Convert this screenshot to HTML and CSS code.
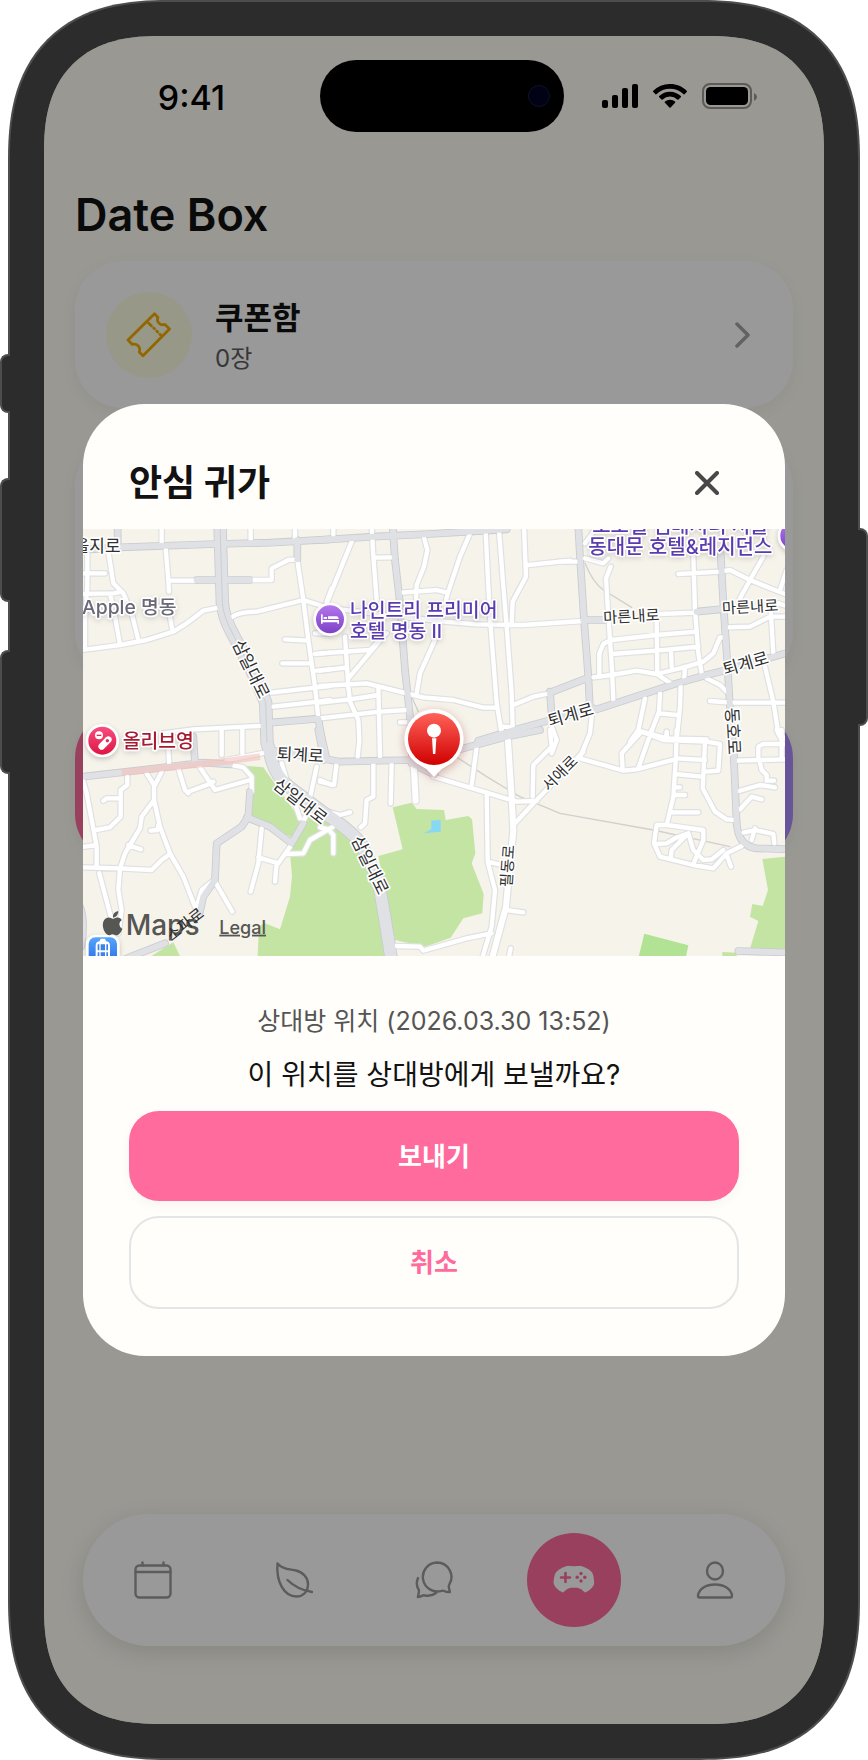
FILE: index.html
```html
<!DOCTYPE html>
<html lang="ko">
<head>
<meta charset="utf-8">
<meta name="viewport" content="width=device-width, initial-scale=1">
<title>Date Box</title>
<link rel="stylesheet" href="styles.css">
</head>
<body>
<div class="phone">
  <span class="side side-action"></span>
  <span class="side side-up"></span>
  <span class="side side-down"></span>
  <span class="side side-power"></span>

  <div class="screen">
    <header class="status">
      <span class="time">9:41</span>
      <span class="island"><span class="camera"></span></span>
      <span class="signals">
        <svg width="36" height="24" viewBox="0 0 36 24"><rect y="16" width="6" height="8" rx="2"/><rect x="10" y="11" width="6" height="13" rx="2"/><rect x="20" y="4" width="6" height="20" rx="2"/><rect x="30" width="6" height="24" rx="2"/></svg>
        <svg width="34" height="24" viewBox="0 0 34 24"><path d="M17 0C23.600 0 29.600 2.600 33.700 6.800Q34.300 7.500 33.700 8.100L31.500 10.200Q30.900 10.700 30.300 10.100A19 19 0 0 0 3.700 10.100Q3.100 10.700 2.500 10.200L.3 8.100Q-.3 7.500.3 6.800A23.600 23.600 0 0 1 17 0Z"/><path d="M17 7.800c4.200 0 8 1.600 10.800 4.300q.6.600 0 1.200l-2.300 2.200q-.6.500-1.200 0a10.600 10.600 0 0 0-14.600 0q-.6.500-1.200 0l-2.300-2.200q-.6-.6 0-1.200A15.600 15.600 0 0 1 17 7.800Z"/><path d="M17 15.700c1.900 0 3.700.7 5 1.900q.7.600.1 1.200l-4.500 4.600q-.6.600-1.200 0l-4.500-4.600q-.6-.6.1-1.200a7.500 7.500 0 0 1 5-1.900Z"/></svg>
        <svg width="56" height="26" viewBox="0 0 56 26"><rect x="1" y="1" width="48" height="24" rx="7" fill="none" stroke="#000" stroke-opacity=".4" stroke-width="2"/><rect x="4" y="4" width="42" height="18" rx="4.500"/><path d="M52 10q3 1.500 3 4t-3 4Z" opacity=".4"/></svg>
      </span>
    </header>

    <main class="content">
      <h1>Date Box</h1>
      <button class="card coupon" type="button">
        <span class="badge">
          <svg width="46" height="46" viewBox="0 0 46 46" fill="none" stroke="#f4ac00" stroke-width="2.800" stroke-linejoin="round" stroke-linecap="round"><path d="M28.500 1.800 32 5.500Q30.500 9 33 11.200T39 12.500L43.500 17 17 43.800 13.300 40Q14.500 36.500 12.300 34T6 32.300L2 28Z"/><path d="m22.500 11 3 3m2.200 2 .8.800m2.200 2.200 1 1m2.200 2.200 2 2"/></svg>
        </span>
        <span class="coupon-text"><strong>쿠폰함</strong><small>0장</small></span>
        <svg class="chevron" width="16" height="28" viewBox="0 0 16 28" fill="none" stroke="#a3a3a3" stroke-width="3.500" stroke-linecap="round" stroke-linejoin="round"><path d="m2 3 11 11L2 25"/></svg>
      </button>
      <div class="card card-plain"></div>
      <div class="card card-gradient"></div>
    </main>

    <nav class="tabs" aria-label="메뉴">
      <button type="button" aria-label="캘린더"><svg width="38" height="38" viewBox="0 0 38 38"><rect x="1.500" y="4.500" width="35" height="32" rx="4"/><path d="M1.500 11h35M8.500 1.500v3m21-3v3"/></svg></button>
      <button type="button" aria-label="기록"><svg width="38" height="38" viewBox="0 0 38 38"><path d="M2.500 2.500C8 9 15 8 21 9.500 28 11 33 17 33 23 33 31 28 35.500 21.500 35.500 9 35.500 1 21 2.500 2.500Z"/><path d="M12.500 19Q22 28.500 37 31"/></svg></button>
      <button type="button" aria-label="채팅"><svg width="38" height="38" viewBox="0 0 38 38"><path d="M22 1.500A14.500 14.500 0 0 1 34.300 23.500Q33.500 25 34 27l.8 4q-3 .3-5.500-1-1.200-.7-2.500-.2A14.500 14.500 0 1 1 22 1.500Z"/><path d="M3 17q-2.500 6 .3 11 1 1.500.5 3.500l-.9 4.500q2.600-.2 4.700-1.400 1-.5 2.500-.1 6.400 1 11-2.500"/></svg></button>
      <button type="button" class="active" aria-label="게임"><svg width="42" height="30" viewBox="0 0 42 30"><path d="M6 1.500Q9-.3 13 .3q4 1 8 1T29 .3q4-.6 7 1.200 4 4 5 13.500.6 6 .4 10-.3 4-4 5-3 .6-6-3-3.500-4-7-4.300h-7q-3 .3-6.500 4-3.500 4-6.500 3.300-4-.8-4-5Q-.2 20 1 13 2.500 5 6 1.500Z"/><g class="pad"><path d="M12.500 8v9m-4.500-4.500h9"/><circle cx="28" cy="8.500" r="1.700"/><circle cx="28" cy="16" r="1.700"/><circle cx="24.200" cy="12.300" r="1.700"/><circle cx="31.800" cy="12.300" r="1.700"/></g></svg></button>
      <button type="button" aria-label="프로필"><svg width="38" height="38" viewBox="0 0 38 38"><ellipse cx="19" cy="10" rx="8" ry="8.500"/><path d="M3.500 36.500q-1.500 0-1.500-2C3 28 10 23.500 19 23.500s16 4.500 17 11q0 2-1.500 2Z"/></svg></button>
    </nav>

    <div class="backdrop">
      <section class="modal" role="dialog" aria-modal="true" aria-labelledby="dialog-title">
        <header class="modal-head">
          <h2 id="dialog-title">안심 귀가</h2>
          <button class="close" type="button" aria-label="닫기"><svg width="24" height="24" viewBox="0 0 24 24" fill="none" stroke="#484848" stroke-width="4" stroke-linecap="round"><path d="m2 2 20 20M22 2 2 22"/></svg></button>
        </header>

        <svg class="map" viewBox="0 0 2106 1281" role="img" aria-label="지도">
          <defs>
            <linearGradient id="gRed" x2="0" y2="1"><stop stop-color="#ff6259"/><stop offset="1" stop-color="#cf0000"/></linearGradient>
            <linearGradient id="gPurple" x2="0" y2="1"><stop stop-color="#b679ee"/><stop offset="1" stop-color="#7a3fc4"/></linearGradient>
            <linearGradient id="gPink" x2="0" y2="1"><stop stop-color="#fa4f83"/><stop offset="1" stop-color="#dc1440"/></linearGradient>
            <linearGradient id="gBlue" x2="0" y2="1"><stop stop-color="#58a8ff"/><stop offset="1" stop-color="#2467e0"/></linearGradient>
            <g id="streets">
              <path transform="translate(-39 -27)" d="M275 20V75M542 20V65M675 20V60M287 85 295 180 297 215M297 275 308 335M295 182H380M540 180H605V145L655 120 680 118M682 120 700 240 715 360 735 500 745 595M485 292Q505 276 560 275L600 265 700 240 770 262M770 245 785 205M30 391 150 375 230 360 310 335 350 310 400 272 450 262M115 95 130 190 160 220 185 280 205 360M30 160H105M30 222 130 220 155 215M52 100V200L45 300V388M120 220 135 290 150 375M645 358 715 362M637 430H725M735 340H780M735 402 780 398M740 452 780 448M605 518 735 503 780 498M610 560 745 545 780 540M280 640 370 628 570 618M455 628V705M517 622V700"/>
              <path transform="translate(711 -27)" d="M40 20V45M95 65 20 250M155 20 160 110 170 240M160 113 215 112M310 45 322 90 312 140 290 195 288 240M450 40 420 110 385 215 345 360 300 460 290 520M497 35 505 200 512 320 530 550 545 640M537 30 550 200 560 320 575 520 578 620M612 20 618 170 578 245 575 310M625 135 750 122M245 218 350 210 380 218M0 258 60 268 240 290 375 305 470 313 610 315 790 303M0 400 150 390 200 340M75 350 85 500 90 545 115 600 118 660 113 710M0 452 75 443M0 498 140 490 260 520 310 532 400 540 490 563H530M85 475 190 350M0 548 90 538 175 525M0 595 180 575 260 570M175 500 180 710M240 607H262M580 555 640 530 680 522M548 620 575 622M695 620 710 660 695 700"/>
              <path transform="translate(1431 -27)" d="M0 125H50M105 30 75 70M75 115 130 130 145 115M152 140 138 175 145 290 155 430 160 540M400 110 405 270 415 400 425 460M355 162 480 155 510 150 570 180 680 224M610 110 570 180 540 235M660 210 680 150M300 282 405 278M655 250 680 258M155 360 290 345 410 335M155 402 290 392 415 380M290 300 292 460M333 395 335 440M100 472 155 465 230 452 290 462 335 492M290 462 380 440 430 425 460 400 480 352H492M155 358 130 372 118 400V465M375 440 372 485M362 500 360 560 350 660M505 322 570 320 630 290H680M632 270 640 400M440 475 480 495 505 520M450 543 510 548H680M615 440 640 545 655 640 680 660M255 535 235 630 210 665M300 520 297 575 270 645M297 580 350 585M235 632 320 655 440 658M320 635V655M95 590 90 640 60 712"/>
              <path transform="translate(-39 603)" d="M480 104 520 112 545 140V185M470 90 600 65M295 60 298 110M325 115 345 180 355 190M355 185 410 165 430 155M385 105 435 180 540 150M172 140V165L152 180V260L120 292 78 300M100 212 110 205H150M39 150 50 190 80 350V410M30 352 80 345M230 130 252 165V210L215 260 210 295 165 370 150 415 145 480 155 540 145 610M275 125 255 165M252 210 270 290 300 370 340 440 375 530M242 302 262 300 265 285M175 345 213 358M30 412 150 415 245 420 275 390 300 372M88 430 125 570M380 530 395 480 430 452M435 455 487 545M575 295 565 400 542 485M565 382 625 400 660 350M620 400 615 455M650 372 700 370 720 330 790 290M740 110 710 250 695 290M750 150 785 165M635 100 650 150 690 265"/>
              <path transform="translate(711 603)" d="M50 100 42 165 0 155M160 100V200L140 210 135 280 122 292M215 95 212 220M340 140 500 188 590 215 650 213M470 50 455 165M545 0 560 20M500 190 503 395 525 480 515 590 485 690M503 395 545 405M558 540 610 547M225 648 300 650 310 662 440 625 515 610M572 655 565 690M690 0 695 50 640 105 638 200M585 280 645 215 790 65M0 292 25 298 40 315V370M0 240 60 255 90 247"/>
              <path transform="translate(1431 603)" d="M60 85 190 122 230 118 345 88M240 10 185 70 188 120M275 0 235 115M245 5 310 30 440 35 480 42 475 122 440 125M350 0 348 80 340 200 320 285M348 85 435 90M435 35 428 175 465 245 500 268 525 270M345 132 425 140M345 172H360M345 195H375M335 247H415M320 10V30M320 285 290 285 282 340 300 380 400 405 460 415 500 370 545 348M320 285 430 300V330L405 390 400 405M290 342 320 340 345 325 385 310 335 360 332 385M385 310 400 360 430 390 455 388 490 360M500 375 513 410M530 92 680 88M595 90V50L610 42H680M665 0V85M598 90 605 120 620 135 620 152 642 152M537 183 600 165 645 172M540 238 575 200 605 208M550 308 585 300 640 312 643 340M585 295 575 330M650 0 665 30"/>
            </g>
            <g id="wide">
              <path d="M992 705 998 815M1274 620 1286 805 1291 905 1279 1023 1269 1133 1228 1285"/>
            </g>
            <g id="avenues">
              <path transform="translate(-39 -27)" d="M30 90 150 82 440 72 600 68 780 58M143 20V85M380 180H540M682 60V118M600 608 745 596 762 700"/>
              <path transform="translate(711 -27)" d="M0 60 160 50 330 42 560 28M218 20 225 120 240 250 255 450 270 590 276 720M475 662 600 625 820 565M690 515 695 590M690 518 800 475"/>
              <path transform="translate(1431 -27)" d="M55 20 60 110 72 300 85 470 90 572M110 568 350 490 440 465 500 450 690 396M70 300H135M410 275 480 268M482 100 490 250 500 400 510 560 522 720"/>
              <path transform="translate(-39 603)" d="M30 141 200 122 400 98 480 103M370 20 375 100M745 0 762 90M540 185 535 260 515 290 440 340 435 450 400 500 390 545M285 640 170 685M530 262 600 290 665 340 700 280M30 530Q46 570 34 650"/>
              <path transform="translate(711 603)" d="M-140 62 20 88 60 95 270 90 330 85 430 55 560 20 660 0M0 0 20 88M275 100 345 135"/>
              <path transform="translate(1431 603)" d="M520 50 530 280Q535 350 590 355L690 358M535 663 690 668"/>
            </g>
            <path id="boulevard" d="M411-10 416 153 418 220Q421 265 451 318L506 423 548 520 552 640 563 680Q575 740 620 775L720 850Q800 900 835 945L885 1050 906 1170 925 1290"/>
          </defs>

          <rect width="2106" height="1281" fill="#f6f3eb"/>
          <g fill="#c3e4a3">
            <path d="M486 710 541 715 661 885 626 925 506 865 511 745Z"/>
            <path d="M661 873 621 973 627 1040 621 1103 591 1201 546 1183 528 1191 524 1281H916L881 1023 811 913 711 843Z"/>
            <path d="M291 1281 271 1240 205 1281Z"/>
            <path transform="translate(711 603)" d="M218 232 275 218 290 237 372 240 377 270 445 258 456 268 466 370 455 400 491 492 487 550 430 565 392 623 315 650 225 630 175 378 248 358Z"/>
            <path transform="translate(1431 603)" d="M607 387 680 380V660L570 656 595 573 570 560 577 522 608 528 624 480ZM487 666 530 668V680H487Z"/>
            <path transform="translate(1431 603)" fill="#b2e293" d="M253 611 385 646 378 680H236Z"/>
          </g>
          <path fill="#86d8f5" d="M1024 913 1045 900V875L1073 872V908Z"/>
          <g class="rail"><path d="M986 503 1006 548M1111 678 1211 743 1311 803 1431 853 1711 903 1941 953M1506 103Q1531 163 1561 183L1646 235"/></g>
          <g class="roads">
            <use href="#streets" class="case-s"/><use href="#wide" class="case-w"/>
            <use href="#avenues" class="case-a"/><use href="#boulevard" class="case-b"/>
            <use href="#streets" class="fill-s"/><use href="#wide" class="fill-w"/>
            <use href="#avenues" class="fill-a"/><use href="#boulevard" class="fill-b"/>
            <path d="M411-10 416 153 418 220Q421 265 451 318L506 423 548 520 552 640" stroke="#cdced2" stroke-width="3"/>
            <path d="M116 730 431 697 531 683" stroke="#f3c2ba" stroke-opacity=".6" stroke-width="20" stroke-linecap="butt"/>
          </g>

          <g class="label">
            <text x="-28" y="69">을지로</text>
            <text x="-3" y="255" class="place" fill="#696877">Apple 명동</text>
            <g text-anchor="middle">
              <text transform="translate(488 428) rotate(64)">삼일대로</text>
              <text transform="translate(651 696) rotate(3)">퇴계로</text>
              <text transform="translate(641 831) rotate(38)">삼일대로</text>
              <text transform="translate(845 1016) rotate(64)">삼일대로</text>
              <text transform="translate(1468 575) rotate(-16)">퇴계로</text>
              <text transform="translate(1993 421) rotate(-16)">퇴계로</text>
              <text transform="translate(1932 607) rotate(87)">동호로</text>
              <text class="small" transform="translate(1646 278) rotate(-3)">마른내로</text>
              <text class="small" transform="translate(2002 250) rotate(-3)">마른내로</text>
              <text class="small" transform="translate(1442 744) rotate(-45)">서애로</text>
              <text class="small" transform="translate(1290 1012) rotate(-86)">필동로</text>
            </g>
            <text x="801" y="265" class="place" fill="#5a3cb0">나인트리 프리미어</text>
            <text x="801" y="327" class="place" fill="#5a3cb0">호텔 명동 II</text>
            <text x="1792" y="13" class="place place-lg" fill="#5a3cb0" text-anchor="middle">노보텔 앰배서더 서울</text>
            <text x="1792" y="75" class="place place-lg" fill="#5a3cb0" text-anchor="middle">동대문 호텔&amp;레지던스</text>
            <text x="119" y="658" class="place" fill="#a51a30">올리브영</text>
          </g>

          <g class="poi">
            <circle cx="741" cy="271" r="46" fill="url(#gPurple)"/>
            <circle cx="2134" cy="20" r="46" fill="url(#gPurple)"/>
            <circle cx="58" cy="635" r="46" fill="url(#gPink)"/>
            <rect x="13" y="1221" width="93" height="90" rx="24" fill="url(#gBlue)"/>
          </g>
          <path d="M714 256H719V273H768V284H763V280H719V284H714ZM722 264H732V270H722ZM735 262H762Q767 264 767 270H735Z" fill="#fff"/>
          <g transform="rotate(-45 66 642)"><rect x="42" y="632" width="48" height="20" rx="10" fill="#fff"/><circle cx="76" cy="642" r="5" fill="#e3265a"/></g>
          <circle cx="48" cy="619" r="12" fill="#fff"/><path d="M41 619H55" stroke="#e3265a" stroke-width="4"/>
          <path d="M38 1285V1250Q38 1237 52 1236H67Q81 1237 81 1250V1285ZM50 1236 53 1229H66L69 1236" fill="#fff"/>
          <path d="M44 1246H49V1264H44ZM53 1246H66V1264H53ZM70 1246H75V1264H70ZM44 1270H49V1285H44ZM53 1270H66V1285H53ZM70 1270H75V1285H70Z" fill="#3b82ea"/>

          <path class="pin" d="M1053 540A90 90 0 0 1 1095 709Q1075 719 1065 731L1053 744 1041 731Q1031 719 1011 709A90 90 0 0 1 1053 540Z" fill="#fff"/>
          <circle cx="1053" cy="630" r="78" fill="url(#gRed)"/>
          <circle cx="1053" cy="605" r="21" fill="#fff"/><path d="M1047 628H1060L1057 675H1050Z" fill="#fff"/>

          <g class="brand">
            <path transform="translate(19 182) scale(.84)" d="M103 1148q2 9-5 17-7 7-14 6-2-8 5-16 6-6 14-7ZM116 1180q-9 6-9 15 1 12 11 17-4 11-12 19-7 6-15 2-8-4-16 0-8 3-14-3-13-14-13-33 1-23 20-26 7 0 13 3 4 2 8 0 7-4 14-3 8 1 13 9Z"/>
            <text x="128" y="1218" class="maps">Maps</text>
            <a href="#legal"><text x="409" y="1214" class="legal">Legal</text></a>
            <text class="sopa" text-anchor="middle" transform="translate(316 1199) rotate(-38)">소파로</text>
            <text class="sopa" text-anchor="middle" transform="translate(945 1305) rotate(65)">소</text>
          </g>
        </svg>

        <div class="modal-body">
          <p class="meta">상대방 위치 (2026.03.30 13:52)</p>
          <p class="question">이 위치를 상대방에게 보낼까요?</p>
          <button class="btn btn-primary" type="button">보내기</button>
          <button class="btn btn-outline" type="button">취소</button>
        </div>
      </section>
    </div>
  </div>
</div>
</body>
</html>
```
FILE: styles.css
```css
* { box-sizing: border-box; }
body {
  margin: 0;
  background: #fff;
  color: #121212;
  font-family: Inter, "Noto Sans CJK KR", sans-serif;
}
h1, h2, p { margin: 0; }
button {
  margin: 0;
  padding: 0;
  border: 0;
  background: none;
  color: inherit;
  font: inherit;
  cursor: pointer;
}
svg { display: block; flex: none; }

/* Device */
.phone {
  position: relative;
  display: flex;
  min-height: 100vh;
  margin: 0 8px;
  padding: 34px;
  border: 2px solid #4d4d4d;
  border-radius: 132px;
  background: #2c2c2c;
}
.screen {
  position: relative;
  display: flex;
  flex: 1;
  flex-direction: column;
  min-width: 0;
  padding: 24px 31px 78px;
  overflow: hidden;
  border-radius: 94px;
  background: #fffef6;
}
@supports (corner-shape: superellipse(1.3)) {
  .phone { border-radius: 160px; corner-shape: superellipse(1.3); }
  .screen { border-radius: 116px; corner-shape: superellipse(1.3); }
}
.side {
  position: absolute;
  left: -10px;
  width: 10px;
  border: 2px solid #4d4d4d;
  border-right: 0;
  border-radius: 8px 0 0 8px;
  background: #2c2c2c;
}
.side-action { top: 352px; height: 59px; }
.side-up { top: 476px; height: 124px; }
.side-down { top: 648px; height: 124px; }
.side-power {
  top: 526px;
  right: -10px;
  left: auto;
  height: 198px;
  border: 2px solid #4d4d4d;
  border-left: 0;
  border-radius: 0 8px 8px 0;
}

/* Status bar */
.status {
  position: relative;
  z-index: 2;
  display: grid;
  grid-template-columns: 1fr 244px 1fr;
  align-items: center;
  height: 72px;
  padding-left: 16px;
  color: #000;
}
.time {
  padding: 4px 28px 0 0;
  font-size: 34px;
  font-weight: 500;
  line-height: 40px;
  text-align: center;
}
.island {
  display: flex;
  align-items: center;
  justify-content: flex-end;
  height: 72px;
  padding-right: 14px;
  border-radius: 36px;
  background: #000;
}
.camera {
  width: 22px;
  height: 22px;
  border: 1px solid #10102a;
  border-radius: 50%;
  background: #020217;
}
.signals { display: flex; align-items: center; gap: 15px; padding-left: 38px; }

/* Page content */
.content { display: flex; flex-direction: column; gap: 30px; padding-top: 56px; }
h1 { margin-bottom: -11px; font-size: 45px; font-weight: 600; line-height: 54px; }
.card {
  border-radius: 48px;
  background: #fff;
  box-shadow: 0 4px 16px rgba(0, 0, 0, .05);
}
.coupon {
  display: flex;
  align-items: center;
  gap: 23px;
  height: 147px;
  padding: 0 42px 0 31px;
  text-align: left;
}
.badge {
  display: grid;
  place-items: center;
  width: 86px;
  height: 86px;
  border-radius: 50%;
  background: #fdfde4;
}
.coupon-text { display: flex; flex: 1; flex-direction: column; padding-top: 6px; }
.coupon-text strong { font-size: 31px; font-weight: 700; line-height: 42px; }
.coupon-text small { color: #5c5c5c; font-size: 24px; line-height: 40px; }
.card-plain { height: 242px; }
.card-gradient { height: 152px; background: linear-gradient(90deg, #ff6b9d, #ac8cff); }

/* Tab bar */
.tabs {
  display: flex;
  align-items: center;
  height: 132px;
  margin: auto 8px 0;
  border-radius: 66px;
  background: #fff;
  box-shadow: 0 6px 24px rgba(0, 0, 0, .12);
}
.tabs button {
  display: grid;
  flex: 1;
  place-items: center;
  height: 94px;
  fill: none;
  stroke: #9a9a9a;
  stroke-width: 2.4;
  stroke-linecap: round;
  stroke-linejoin: round;
}
.tabs .active { fill: #fff; stroke: none; }
.tabs .active svg {
  box-sizing: content-box;
  padding: 32px 26px;
  border-radius: 50%;
  background: #ff6b9d;
}
.pad { fill: #ff6b9d; stroke: #ff6b9d; stroke-width: 2.6; }
.pad circle { stroke: none; }

/* Dialog */
.backdrop {
  position: absolute;
  inset: 0;
  display: grid;
  align-items: center;
  padding: 0 39px;
  background: rgba(0, 0, 0, .4);
}
.modal {
  overflow: hidden;
  border-radius: 62px;
  background: #fffefa;
}
.modal-head {
  display: flex;
  align-items: center;
  justify-content: space-between;
  height: 125px;
  padding: 32px 56px 0 46px;
}
h2 { font-size: 36px; font-weight: 700; line-height: 48px; }
.close { padding: 10px; }
.map {
  width: 100%;
  height: auto;
  font-family: Inter, "Noto Sans CJK KR", sans-serif;
}
.modal-body {
  display: flex;
  flex-direction: column;
  padding: 46px 46px 47px;
  text-align: center;
}
.meta { color: #555; font-size: 25px; line-height: 38px; }
.question { margin: 13px 0 14px; font-size: 28px; line-height: 44px; }
.btn { padding-bottom: 4px; border-radius: 30px; font-size: 26px; font-weight: 700; }
.btn-primary {
  height: 90px;
  background: #ff6b9d;
  box-shadow: 0 4px 12px rgba(0, 0, 0, .04);
  color: #fff;
}
.btn-outline {
  height: 93px;
  margin-top: 15px;
  border: 2px solid #e4e5e7;
  color: #ff6b9d;
}

/* Map drawing */
.roads, .rail { fill: none; stroke-linecap: round; stroke-linejoin: round; }
.case-s { stroke: #dfe0e2; stroke-width: 20; }
.fill-s { stroke: #fff; stroke-width: 13; }
.case-w { stroke: #dfe0e2; stroke-width: 25; }
.fill-w { stroke: #fff; stroke-width: 18; }
.case-a { stroke: #c9cbcf; stroke-width: 23; }
.fill-a { stroke: #dfe1e5; stroke-width: 18; }
.case-b { stroke: #c9cbcf; stroke-width: 40; }
.fill-b { stroke: #dfe1e5; stroke-width: 35; }
.rail { stroke: #d2d0cc; stroke-width: 4; }
.label { fill: #303030; }
.label text {
  paint-order: stroke;
  stroke: #fff;
  stroke-width: 10px;
  stroke-linejoin: round;
  font-size: 51px;
  font-weight: 400;
}
.label .small { font-size: 46px; }
.label .place {
  font-size: 58px;
  font-weight: 500;
  filter: drop-shadow(0 6px 8px rgba(0, 0, 0, .12));
}
.label .place-lg { font-size: 60px; }
.poi { stroke: #fff; stroke-width: 8; filter: drop-shadow(0 6px 8px rgba(0, 0, 0, .2)); }
.pin { filter: drop-shadow(0 8px 14px rgba(120, 0, 0, .3)); }
.brand { fill: #565653; }
.maps { font-size: 84px; font-weight: 500; }
.legal { font-size: 54px; font-weight: 500; text-decoration: underline; }
.sopa { fill: #2c2c2c; font-size: 46px; }
```
